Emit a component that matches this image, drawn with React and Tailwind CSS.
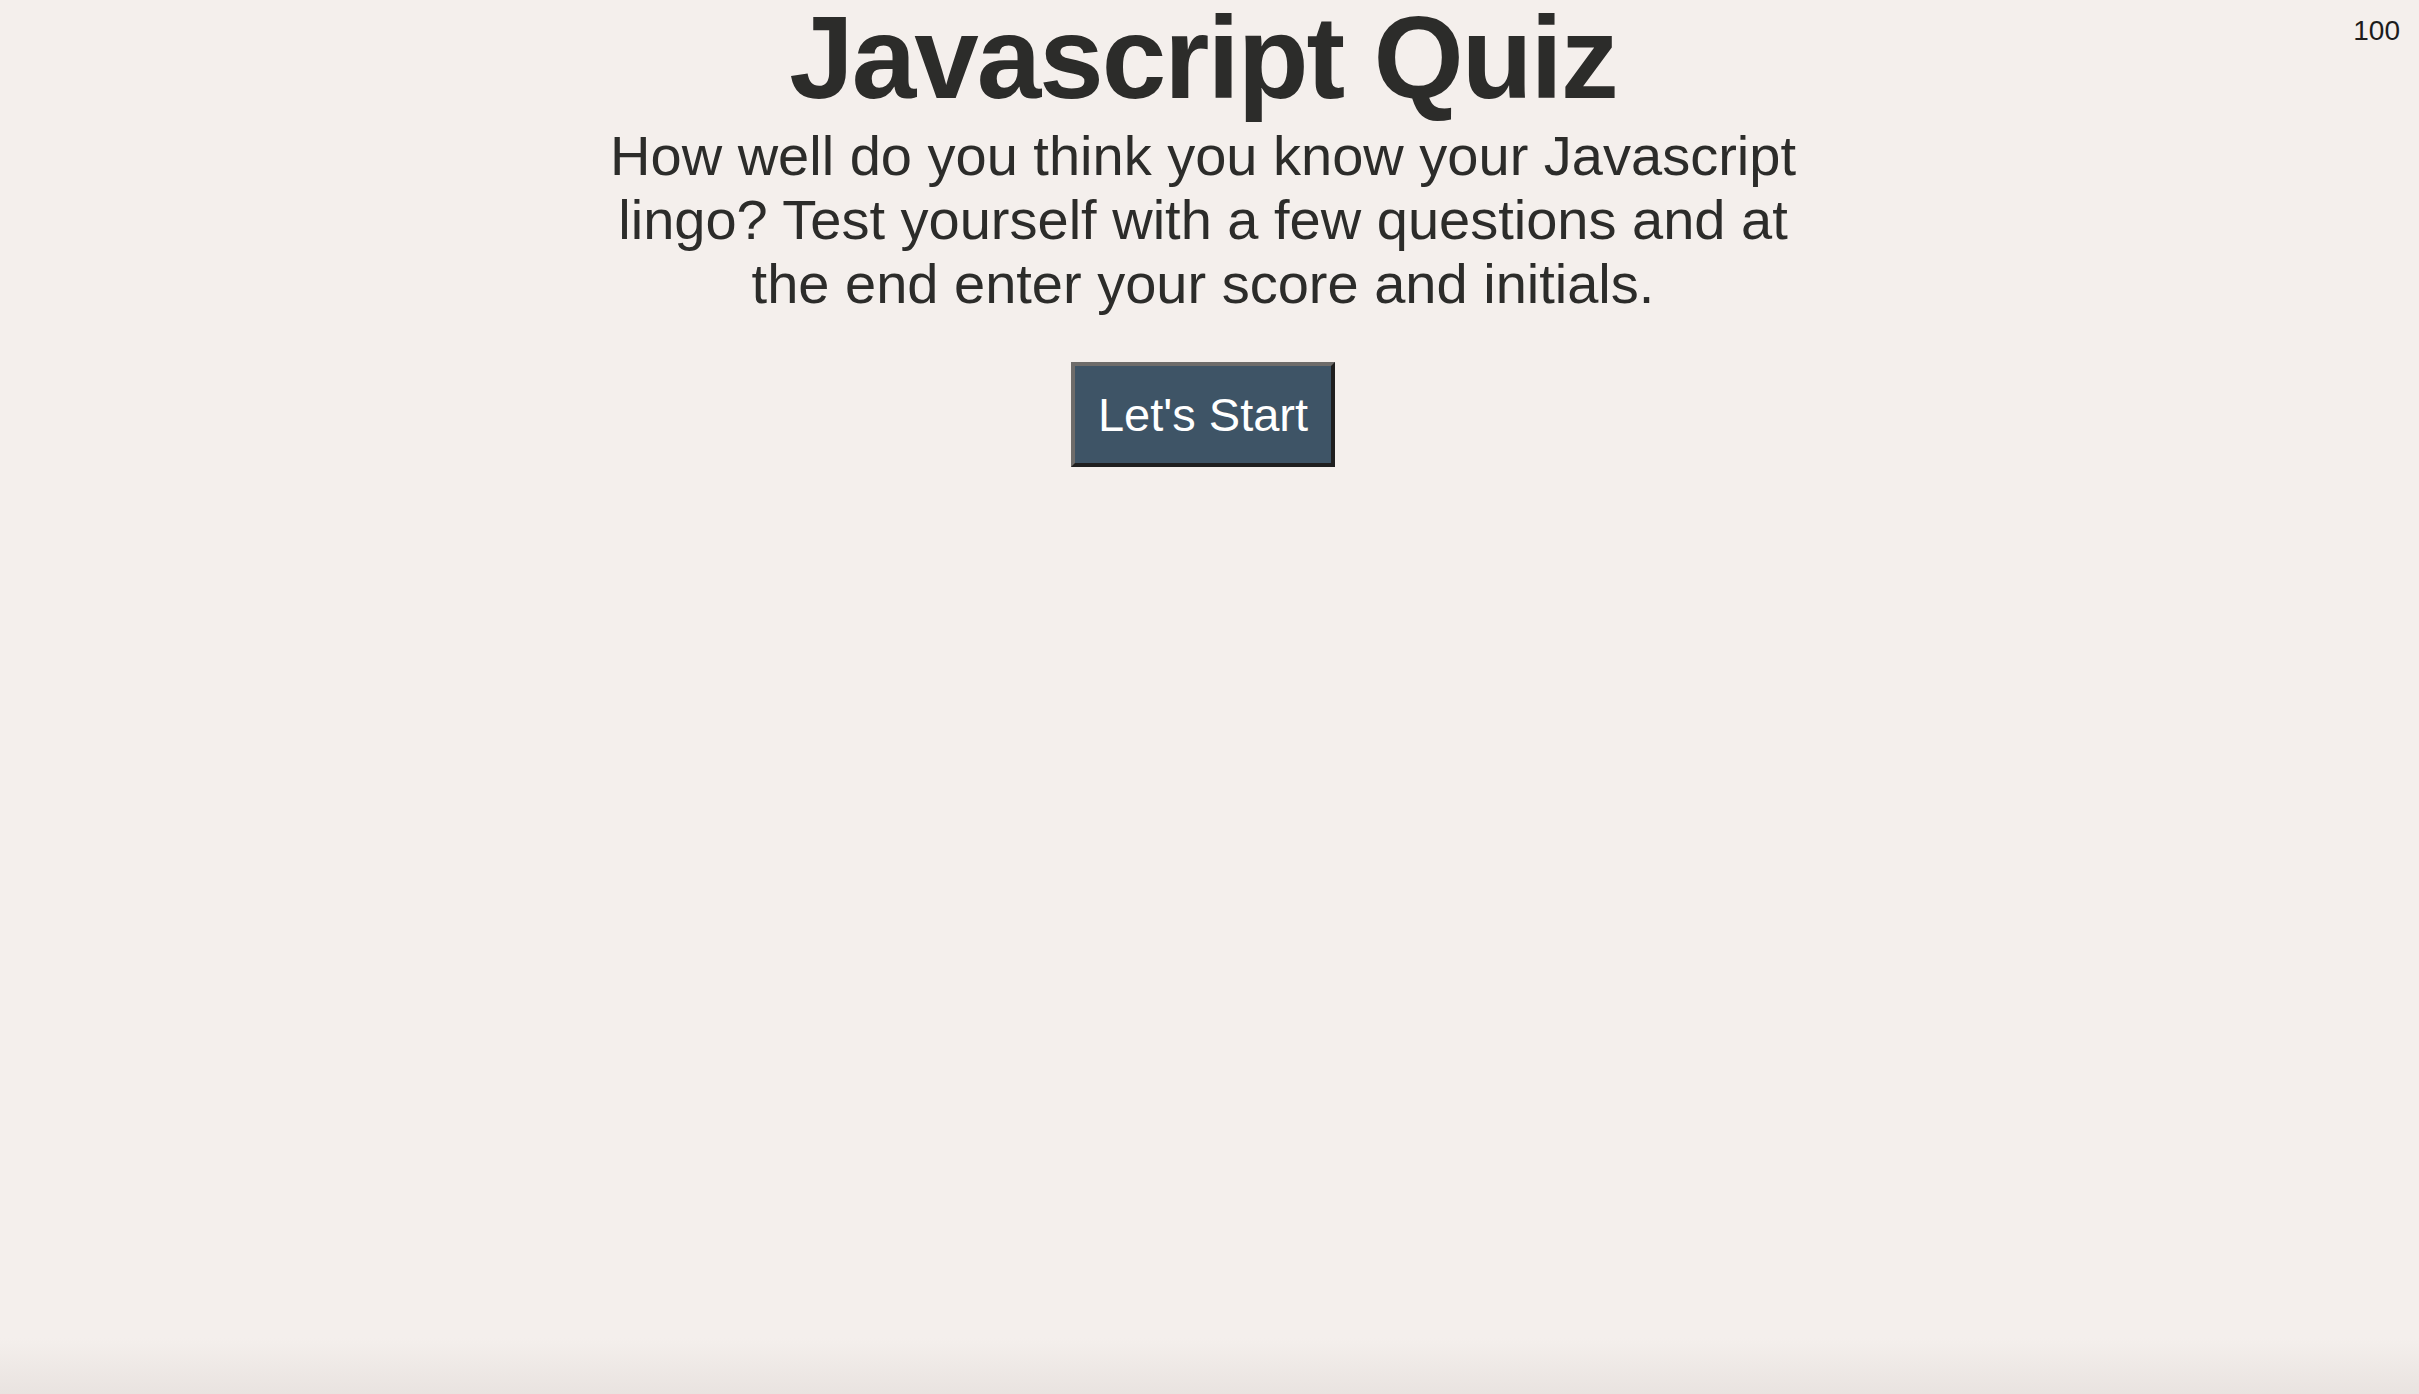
export default function App() {
  return (
    <div className="relative min-h-screen w-full bg-[linear-gradient(to_bottom,#f4efec_96%,#e9e3e0)] font-['Liberation_Sans',Arial,sans-serif] text-[#2c2c2a]">
      <div className="absolute right-[19px] top-[15px] text-[28px] leading-[32px] text-[#1c1c1c]">100</div>

      <main className="flex flex-col items-center pr-[13px]">
        <h1 className="text-[116px] leading-[116px] font-bold tracking-[-2px]">Javascript Quiz</h1>
        <p className="mt-[8px] w-[1220px] text-center text-[56px] leading-[64px]">
          How well do you think you know your Javascript lingo? Test yourself with a few questions and at the end enter your score and initials.
        </p>
        <button className="mt-[46px] border-4 border-t-[#6e6c6a] border-l-[#6e6c6a] border-r-[#1f1f1f] border-b-[#1f1f1f] bg-[#3e5466] px-[23px] py-[22px] text-[47px] leading-[53px] text-white">
          Let's Start
        </button>
      </main>
    </div>
  );
}
